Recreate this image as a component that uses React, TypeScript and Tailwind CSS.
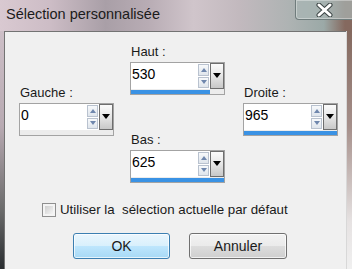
import React from "react"

const font = "font-['Liberation_Sans',Arial,sans-serif]"

function SpinArrow({ up }: { up?: boolean }) {
  return (
    <div className="flex-1 flex items-center justify-center border border-[#b9c2cf] bg-[linear-gradient(180deg,#f7f9fb,#dfe5ec)]">
      <svg width="6" height="4" viewBox="0 0 6 4">
        {up ? <path d="M0 4 L3 0 L6 4 Z" fill="#6f87ad" /> : <path d="M0 0 L3 4 L6 0 Z" fill="#6f87ad" />}
      </svg>
    </div>
  )
}

function Field({ value, pct }: { value: string; pct: number }) {
  return (
    <div className="w-[95px] h-[33px] border border-[#a3a3a3] bg-white flex flex-col">
      <div className="h-[26px] flex">
        <div className="flex-1 pl-[1px] pt-[3px] text-[14px] leading-[16px] text-black">{value}</div>
        <div className="w-[11px] flex flex-col gap-[1px] py-[1px]">
          <SpinArrow up />
          <SpinArrow />
        </div>
        <div className="w-[14px] ml-[1px] border border-[#6e6e6e] bg-[linear-gradient(180deg,#fbfbfb,#e6e6e6_50%,#c8c8c8)] flex justify-center pt-[9px]">
          <svg width="8" height="5" viewBox="0 0 8 5">
            <path d="M0 0 L8 0 L4 5 Z" fill="#000" />
          </svg>
        </div>
      </div>
      <div className="h-[5px] bg-[#ececec] pt-[1px]">
        <div className="h-[4px] bg-[#3a92e4]" style={{ width: `${pct}%` }} />
      </div>
    </div>
  )
}

function Labeled({ label, value, pct }: { label: string; value: string; pct: number }) {
  return (
    <div className="flex flex-col">
      <div className="h-[16px] leading-[16px] text-[13px] text-[#1a1a1a] pl-[1px] mb-[2px]">{label}</div>
      <Field value={value} pct={pct} />
    </div>
  )
}

export default function App() {
  return (
    <div className={`w-[352px] h-[269px] overflow-hidden flex flex-col ${font} bg-[linear-gradient(90deg,#d9c9d1_0%,#cdbdc6_14%,#a99fa7_30%,#b8acb4_42%,#d0c5cb_55%,#c2b9be_68%,#aeb3b3_82%,#9ba9a7_92%,#85695f_98%)]`}>
      <div className="h-[31px] flex items-start shrink-0">
        <div className="pl-[6px] pt-[6px] text-[14.5px] leading-[17px] text-[#1b1b1b]">Sélection personnalisée</div>
        <div className="ml-auto mr-[-8px] w-[65px] h-[20px] rounded-b-[4px] border border-t-0 border-[#6f7c7c] bg-[#aab6b5]/70 flex items-center justify-center pr-[6px] shadow-[inset_0_0_0_1px_rgba(255,255,255,0.35)]">
          <svg width="17" height="14" viewBox="0 0 17 14">
            <path d="M3 2 L14 12 M14 2 L3 12" stroke="#3b4444" strokeWidth="5" strokeLinecap="round" />
            <path d="M3 2 L14 12 M14 2 L3 12" stroke="#ffffff" strokeWidth="3" strokeLinecap="round" />
          </svg>
        </div>
      </div>
      <div className="flex-1 flex">
        <div className="w-[4px] bg-[linear-gradient(180deg,#cdbfc7,#b8aab2_40%,#6b6b6b_75%,#2a2d30)]" />
        <div className="w-[342px] bg-[#f0f0f0] border-t border-l border-[#737373] flex flex-col">
          <div className="flex pl-[14px] pt-[12px]">
            <div className="w-[111px] pt-[41px]">
              <Labeled label="Gauche :" value="0" pct={0} />
            </div>
            <div className="w-[113px] flex flex-col">
              <Labeled label="Haut :" value="530" pct={85} />
              <div className="mt-[37px]">
                <Labeled label="Bas :" value="625" pct={100} />
              </div>
            </div>
            <div className="pt-[41px]">
              <Labeled label="Droite :" value="965" pct={100} />
            </div>
          </div>
          <div className="mt-[20px] pl-[37px] flex items-center gap-[4px]">
            <div className="w-[14px] h-[14px] border border-[#8f8f8f] bg-[#f4f4f4] p-[2px]">
              <div className="w-full h-full bg-[linear-gradient(135deg,#cfcfcf,#f4f4f4)]" />
            </div>
            <span className="text-[13.3px] leading-[14px] text-[#1a1a1a] whitespace-pre">Utiliser la  sélection actuelle par défaut</span>
          </div>
          <div className="mt-[16px] pl-[68px] flex gap-[19px]">
            <button className="w-[97px] h-[26px] rounded-[3px] border border-[#3c7fb1] bg-[linear-gradient(180deg,#eaf6fd_0%,#d9f0fc_48%,#bee6fd_50%,#a7d9f5_100%)] shadow-[inset_0_0_0_1px_rgba(255,255,255,0.7)] text-[14px] text-[#1a1a1a]">
              OK
            </button>
            <button className="w-[98px] h-[26px] rounded-[3px] border border-[#707070] bg-[linear-gradient(180deg,#f2f2f2_0%,#ebebeb_48%,#dddddd_50%,#cfcfcf_100%)] shadow-[inset_0_0_0_1px_rgba(255,255,255,0.7)] text-[14px] text-[#1a1a1a]">
              Annuler
            </button>
          </div>
        </div>
        <div className="flex-1 border-l border-[#d8d8d8] bg-[linear-gradient(180deg,#84695f,#a58f8a_40%,#e6e2e2_80%,#f0f0f0)]" />
      </div>
    </div>
  )
}
